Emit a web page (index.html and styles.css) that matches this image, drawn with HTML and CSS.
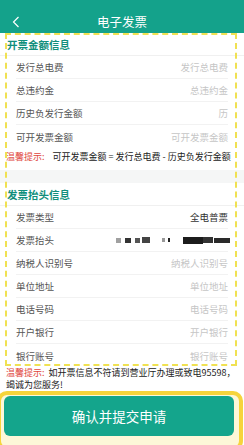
FILE: index.html
```html
<!DOCTYPE html>
<html lang="zh-CN">
<head>
    <meta charset="UTF-8">
    <meta name="viewport" content="width=device-width, initial-scale=1.0">
    <title>电子发票</title>
    <link rel="stylesheet" href="styles.css">
</head>
<body>
    <header class="topbar">
        <svg class="back" width="8" height="12" viewBox="0 0 8 12"><path d="M6.5 1 L1.5 6 L6.5 11" fill="none" stroke="#fff" stroke-width="1.2"/></svg>
        <div class="title">电子发票</div>
    </header>

    <div class="form-area">
        <section class="group">
            <div class="group-title">开票金额信息</div>
            <div class="row"><span class="label">发行总电费</span><span class="value ph">发行总电费</span></div>
            <div class="row"><span class="label">总违约金</span><span class="value ph">总违约金</span></div>
            <div class="row"><span class="label">历史负发行金额</span><span class="value ph">历</span></div>
            <div class="row last"><span class="label">可开发票金额</span><span class="value ph">可开发票金额</span></div>
            <div class="tip"><span class="tip-key">温馨提示:</span><span class="tip-text">可开发票金额 = 发行总电费 - 历史负发行金额</span></div>
        </section>

        <div class="band"></div>

        <section class="group">
            <div class="group-title">发票抬头信息</div>
            <div class="row"><span class="label">发票类型</span><span class="value">全电普票</span></div>
            <div class="row">
                <span class="label">发票抬头</span>
                <span class="masked">
                    <i class="m1"></i><i class="m2"></i><i class="m3"></i><i class="m4"></i><i class="m5"></i><i class="m6"></i><i class="m7"></i><i class="m8"></i><i class="m9"></i>
                </span>
            </div>
            <div class="row"><span class="label">纳税人识别号</span><span class="value ph">纳税人识别号</span></div>
            <div class="row"><span class="label">单位地址</span><span class="value ph">单位地址</span></div>
            <div class="row"><span class="label">电话号码</span><span class="value ph">电话号码</span></div>
            <div class="row"><span class="label">开户银行</span><span class="value ph">开户银行</span></div>
            <div class="row last"><span class="label">银行账号</span><span class="value ph">银行账号</span></div>
        </section>
    </div>

    <p class="notice"><span class="tip-key">温馨提示:</span>&nbsp;&nbsp;如开票信息不符请到营业厅办理或致电95598，<br>竭诚为您服务!</p>

    <div class="submit-wrap">
        <button class="submit">确认并提交申请</button>
    </div>
</body>
</html>
```

FILE: styles.css
```css
body {
    margin: 0;
    width: 244px;
    height: 445px;
    overflow: hidden;
    background-color: #fff;
    font-family: "Noto Sans CJK SC", "Noto Sans", sans-serif;
    color: #555;
}

.topbar {
    height: 33px;
    background-color: #14a28b;
    display: flex;
    align-items: center;
    justify-content: center;
    position: relative;
}

.back {
    position: absolute;
    left: 12px;
    top: 16px;
}

.title {
    color: #fff;
    font-size: 12.5px;
    margin-top: 10px;
}

.form-area {
    position: relative;
}

/* yellow dashed marker drawn over the form */
.form-area::after {
    content: "";
    position: absolute;
    left: 5px;
    right: 7px;
    top: 0;
    height: 329px;
    border: 2px dashed #f0e152;
    pointer-events: none;
}

.group-title {
    height: 23px;
    line-height: 23px;
    padding-left: 7px;
    font-size: 10.5px;
    font-weight: bold;
    color: #118f7c;
    border-bottom: 1px solid #f0f0f0;
    box-sizing: border-box;
}

.row {
    height: 23px;
    margin: 0 16px;
    display: flex;
    align-items: center;
    justify-content: space-between;
    border-bottom: 1px solid #f2f2f2;
    box-sizing: border-box;
    font-size: 9.5px;
}

.row.last {
    border-bottom: none;
}

.label {
    color: #555;
}

.value {
    color: #333;
}

.value.ph {
    color: #c6c6c6;
}

.tip {
    height: 17px;
    line-height: 17px;
    padding-left: 6px;
    font-size: 9px;
    white-space: nowrap;
}

.tip-key {
    color: #e0453c;
}

.tip-text {
    color: #222;
    margin-left: 8px;
}

.band {
    height: 13px;
    margin-top: 5px;
    background-color: #f5f6f6;
}

.masked {
    display: flex;
    align-items: center;
    height: 7px;
    margin-right: -2px;
}

.masked i {
    display: block;
    height: 5px;
}

.masked .m1 { width: 5px; background-color: #a0a0a0; }
.masked .m2 { width: 6px; background-color: #333; margin-left: 4px; }
.masked .m3 { width: 5px; background-color: #555; margin-left: 4px; }
.masked .m4 { width: 8px; height: 6px; background-color: #444; margin-left: 2px; }
.masked .m5 { width: 3px; height: 4px; background-color: #999; margin-left: 12px; }
.masked .m6 { width: 2px; height: 4px; background-color: #222; margin-left: 3px; }
.masked .m7 { width: 20px; height: 7px; background-color: #1c1c1c; margin-left: 13px; }
.masked .m8 { width: 10px; height: 6px; background-color: #333; }
.masked .m9 { width: 16px; height: 5px; background-color: #2a2a2a; margin-left: 1px; }

.notice {
    margin: 0;
    padding: 0 0 0 6px;
    font-size: 9px;
    line-height: 12px;
    color: #222;
    white-space: nowrap;
}

.submit-wrap {
    height: 60px;
    width: 246px;
    margin-left: -3px;
    border: 4px solid #f6d43c;
    border-radius: 10px;
    padding: 1px 5px 0 3px;
    box-sizing: border-box;
    background-color: #fdf7d8;
}

.submit {
    display: block;
    width: 100%;
    height: 40px;
    border: none;
    border-radius: 6px;
    background-color: #14a58c;
    color: #fff;
    font-family: "Noto Sans CJK SC", "Noto Sans", sans-serif;
    font-size: 13.5px;
}
```
